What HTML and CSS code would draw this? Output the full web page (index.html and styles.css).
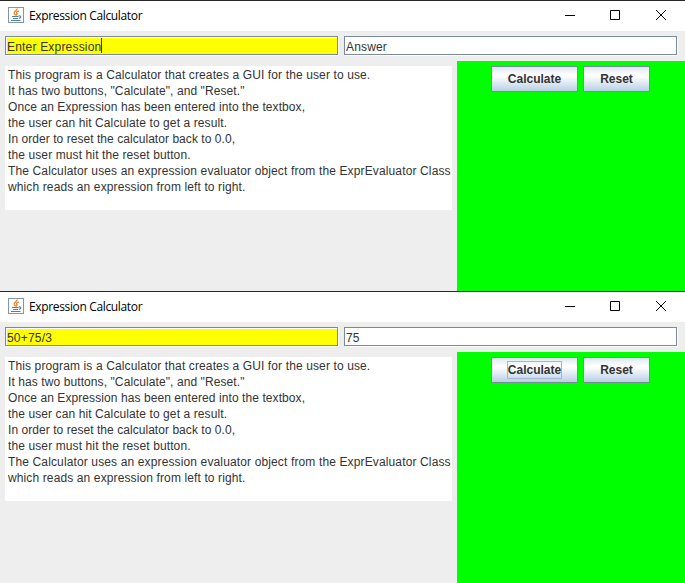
FILE: index.html
```
<!DOCTYPE html>
<html lang="en">
<head>
<meta charset="utf-8">
<title>Expression Calculator</title>
<link rel="stylesheet" href="styles.css">
</head>
<body>
<svg class="defs" width="0" height="0">
  <defs>
    <linearGradient id="tile" x1="0" y1="0" x2="0" y2="1"><stop offset="0" stop-color="#c3d2df"/><stop offset=".35" stop-color="#f5f8fa"/><stop offset=".7" stop-color="#e3ebf2"/><stop offset="1" stop-color="#a9bfd2"/></linearGradient>
    <symbol id="java" viewBox="0 0 16 16">
      <rect x=".5" y=".5" width="15" height="15" fill="url(#tile)" stroke="#8097aa"/>
      <path d="M9 1.500C9.700 3.700 5.200 4.300 6.200 6.300L7.700 8.300M10.800 3.900C8.700 4.700 7.900 5.500 9 6.900L8.300 8.400" fill="none" stroke="#ee7d22" stroke-width="1.300"/>
      <path d="M4 9.500H10.500M5 11.500H10M10.800 9C13.300 8.300 13.300 10.800 10.800 11.500M3 13.500H12.500" fill="none" stroke="#527f9f" stroke-width="1.200"/>
    </symbol>
  </defs>
</svg>
<section class="window">
  <header class="titlebar">
    <svg class="logo"><use href="#java"/></svg>
    <h1>Expression Calculator</h1>
    <svg class="controls" viewBox="0 0 104 12"><path d="M1 6.500H11M46.500 1.500H55.500V10.500H46.500ZM92 1L102 11M102 1L92 11"/></svg>
  </header>
  <div class="fields">
    <div class="field expression"><span class="entry">Enter Expression</span><i class="caret"></i></div>
    <div class="field answer">Answer</div>
  </div>
  <main>
    <div class="description">
      <p class="l1">This program is a Calculator that creates a GUI for the user to use.</p>
      <p class="l2">It has two buttons, "Calculate", and "Reset."</p>
      <p class="l3">Once an Expression has been entered into the textbox,</p>
      <p class="l4">the user can hit Calculate to get a result.</p>
      <p class="l5">In order to reset the calculator back to 0.0,</p>
      <p class="l6">the user must hit the reset button.</p>
      <p class="l7">The Calculator uses an expression evaluator object from the ExprEvaluator Class</p>
      <p class="l8">which reads an expression from left to right.</p>
    </div>
    <div class="actions">
      <button class="calculate"><span>Calculate</span></button>
      <button class="reset"><span>Reset</span></button>
    </div>
  </main>
</section>
<section class="window">
  <header class="titlebar">
    <svg class="logo"><use href="#java"/></svg>
    <h1>Expression Calculator</h1>
    <svg class="controls" viewBox="0 0 104 12"><path d="M1 6.500H11M46.500 1.500H55.500V10.500H46.500ZM92 1L102 11M102 1L92 11"/></svg>
  </header>
  <div class="fields">
    <div class="field expression"><span class="entry">50+75/3</span></div>
    <div class="field answer">75</div>
  </div>
  <main>
    <div class="description">
      <p class="l1">This program is a Calculator that creates a GUI for the user to use.</p>
      <p class="l2">It has two buttons, "Calculate", and "Reset."</p>
      <p class="l3">Once an Expression has been entered into the textbox,</p>
      <p class="l4">the user can hit Calculate to get a result.</p>
      <p class="l5">In order to reset the calculator back to 0.0,</p>
      <p class="l6">the user must hit the reset button.</p>
      <p class="l7">The Calculator uses an expression evaluator object from the ExprEvaluator Class</p>
      <p class="l8">which reads an expression from left to right.</p>
    </div>
    <div class="actions">
      <button class="calculate focused"><span>Calculate</span></button>
      <button class="reset"><span>Reset</span></button>
    </div>
  </main>
</section>
</body>
</html>
```
FILE: styles.css
```
* { box-sizing: border-box; }
body {
  margin: 0;
  height: 583px;
  display: grid;
  grid-template-rows: 291px 292px;
  overflow: hidden;
  background: #eee;
  color: #333;
  font: 12px/16px "Liberation Sans", Arial, sans-serif;
}
.defs { display: none; }
.window {
  display: flex;
  flex-direction: column;
  border-top: 1px solid #262626;
}
.titlebar {
  display: flex;
  align-items: center;
  height: 30px;
  padding: 0 17px 2px 8px;
  background: #fff;
}
.logo { width: 16px; height: 16px; }
h1 {
  margin: 2px 0 0 5px;
  color: #000;
  font: 12px/16px "Open Sans", "Noto Sans", sans-serif;
  letter-spacing: -.35px;
  white-space: nowrap;
}
.controls {
  width: 104px;
  height: 12px;
  margin-left: auto;
  fill: none;
  stroke: #000;
  stroke-width: 1;
}
.fields {
  display: grid;
  grid-template-columns: 334px 334px;
  gap: 5px;
  height: 30px;
  padding: 5px;
}
.field {
  display: flex;
  height: 19px;
  width: 333px;
  padding: 2px 1px 0;
  border: 1px solid #7a8a99;
  background: #fff;
  box-shadow: 1px 1px #fff, inset 1px 1px #fff;
  white-space: nowrap;
}
.expression { background: #ff0; }
.entry { letter-spacing: .19px; }
.answer { letter-spacing: .15px; }
.caret { width: 1px; height: 15px; margin-top: -1px; background: #333; }
main {
  display: grid;
  grid-template-columns: 457px 1fr;
  flex: 1;
}
.description {
  width: 447px;
  height: 144px;
  margin: 5px;
  padding: 1px 3px;
  background: #fff;
}
p { margin: 0; width: max-content; white-space: nowrap; }
.l1 { letter-spacing: .12px; }
.l2 { letter-spacing: .09px; }
.l3 { letter-spacing: .08px; }
.l4 { letter-spacing: .1px; }
.l5 { letter-spacing: .05px; }
.l6 { letter-spacing: .11px; }
.l7 { letter-spacing: .133px; }
.l8 { letter-spacing: .12px; }
.actions {
  display: flex;
  align-items: flex-start;
  gap: 5px;
  padding: 5px 0 0 34px;
  background: #0f0;
}
button {
  display: flex;
  align-items: center;
  justify-content: center;
  height: 26px;
  padding: 0;
  border: 1px solid #7a8a99;
  background: linear-gradient(#dce7f1 0, #fff 32%, #fff 38%, #b8cfe5 100%);
  color: #333;
  font: bold 12px/16px "Liberation Sans", Arial, sans-serif;
}
.calculate { width: 87px; }
.reset { width: 67px; }
.focused span { outline: 1px solid #a3b8cc; }
```
